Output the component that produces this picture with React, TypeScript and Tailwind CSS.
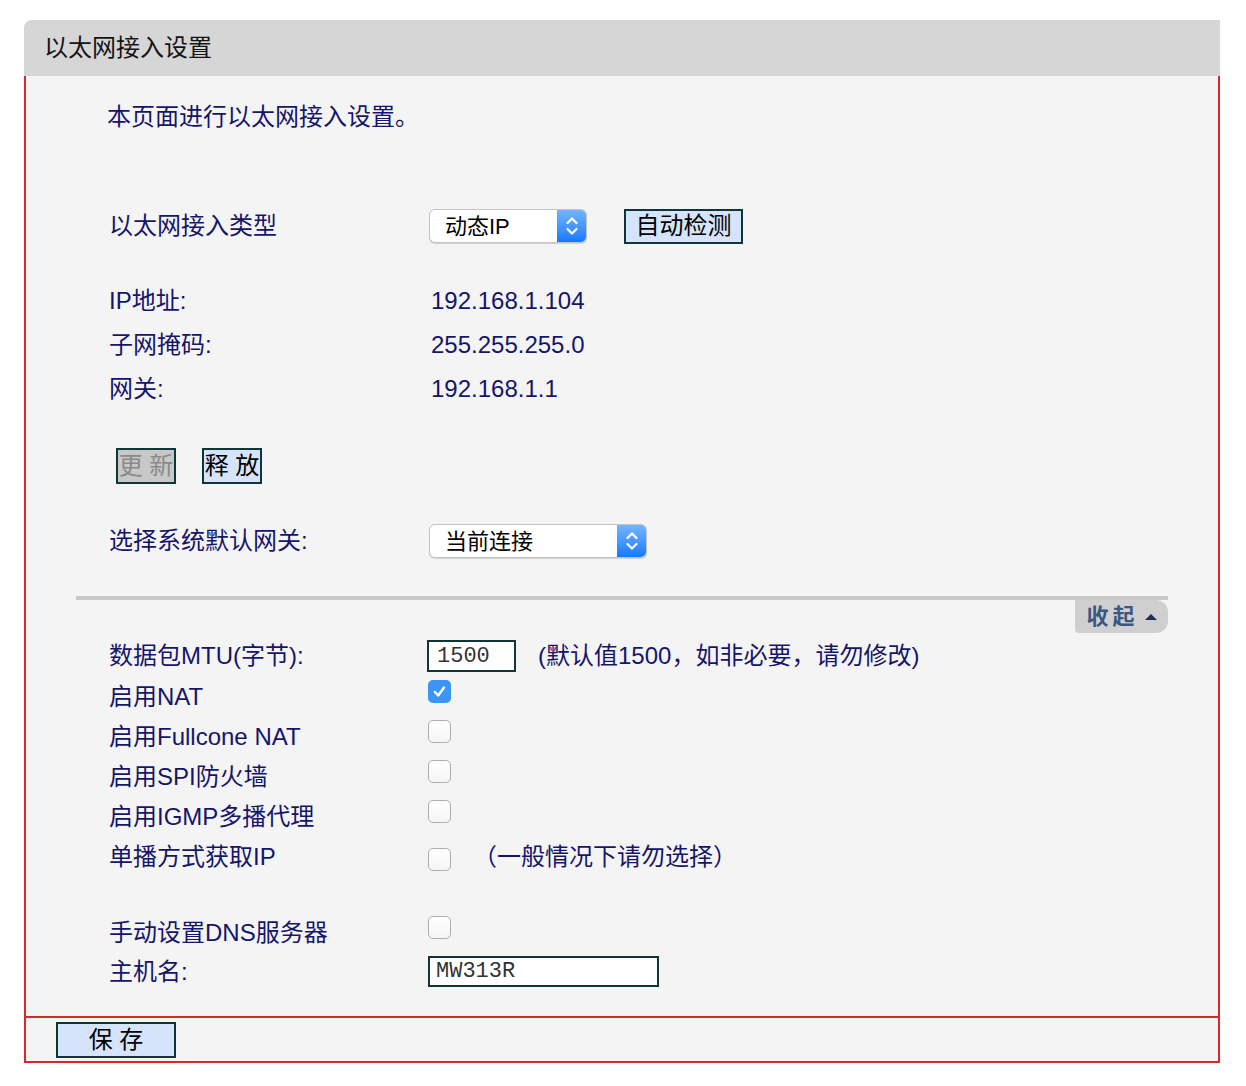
import React from "react";

const NAVY = "text-[#15156a]";

function Select({ label, width }: { label: string; width: string }) {
  return (
    <div className={`flex h-[34px] ${width} rounded-[6px] border border-[#c4c4c4] bg-white shadow-[0_1px_1px_rgba(0,0,0,0.15)] overflow-hidden`}>
      <div className="flex-1 flex items-center pl-[15px] text-[22px] text-black">{label}</div>
      <div className="w-[29px] flex items-center justify-center bg-gradient-to-b from-[#71b5ff] to-[#1678ff]">
        <svg width="14" height="22" viewBox="0 0 14 22" fill="none" stroke="white" strokeWidth="2.2" strokeLinecap="round" strokeLinejoin="round">
          <path d="M2.5 8 L7 3.5 L11.5 8" />
          <path d="M2.5 14 L7 18.5 L11.5 14" />
        </svg>
      </div>
    </div>
  );
}

function Checkbox({ checked = false, mt = "mt-[3px]" }: { checked?: boolean; mt?: string }) {
  if (checked) {
    return (
      <div className={`${mt} w-[23px] h-[23px] rounded-[5px] bg-[#3a95f5] flex items-center justify-center`}>
        <svg width="15" height="15" viewBox="0 0 15 15" fill="none" stroke="white" strokeWidth="2.4" strokeLinecap="round" strokeLinejoin="round">
          <path d="M3 8 L6.2 11.5 L12 3.5" />
        </svg>
      </div>
    );
  }
  return (
    <div className={`${mt} w-[23px] h-[23px] rounded-[5px] border border-[#adadad] bg-gradient-to-b from-white to-[#f5f5f5]`} />
  );
}

function CheckRow({ label, checked = false }: { label: string; checked?: boolean }) {
  return (
    <div className="flex h-[40px] items-start">
      <div className={`w-[319px] h-[40px] flex items-center ${NAVY}`}>{label}</div>
      <Checkbox checked={checked} />
    </div>
  );
}

export default function App() {
  return (
    <div
      className="min-h-[1086px] bg-white pt-[20px] pl-[24px]"
      style={{ fontFamily: '"Liberation Sans", "Noto Sans CJK SC", sans-serif' }}
    >
      <div className="w-[1196px]">
        {/* Header */}
        <div className="h-[56px] bg-[#d6d6d6] rounded-tl-[8px] flex items-center pl-[20px] text-[24px] text-[#141414]">
          以太网接入设置
        </div>

        {/* Body */}
        <div className="border-x-2 border-[#d52a2a] bg-[#f4f4f4] pt-[25px] pb-[26px] text-[24px]">
          <div className={`pl-[81px] h-[32px] flex items-center ${NAVY}`}>本页面进行以太网接入设置。</div>

          <div className="pl-[83px] mt-[75px]">
            <div className="flex h-[36px] items-center">
              <div className={`w-[320px] ${NAVY}`}>以太网接入类型</div>
              <Select label="动态IP" width="w-[158px]" />
              <button className="ml-[37px] h-[35px] w-[119px] border-2 border-[#0f3636] bg-[#d6e4fb] text-black text-[24px] leading-none flex items-center justify-center">
                自动检测
              </button>
            </div>

            <div className="mt-[35px]">
              {[
                ["IP地址:", "192.168.1.104"],
                ["子网掩码:", "255.255.255.0"],
                ["网关:", "192.168.1.1"],
              ].map(([k, v]) => (
                <div key={k} className={`flex h-[44px] items-center ${NAVY}`}>
                  <div className="w-[320px]">{k}</div>
                  <div className="pl-[2px]">{v}</div>
                </div>
              ))}
            </div>

            <div className="flex mt-[37px] ml-[7px] gap-[26px]">
              <div className="h-[36px] w-[60px] border-2 border-[#0f3636] bg-[#c8c8c8] text-[#8a8a8a] flex items-center justify-center leading-none">
                更 新
              </div>
              <div className="h-[36px] w-[60px] border-2 border-[#0f3636] bg-[#d6e4fb] text-black flex items-center justify-center leading-none">
                释 放
              </div>
            </div>

            <div className="flex h-[34px] items-center mt-[40px]">
              <div className={`w-[320px] ${NAVY}`}>选择系统默认网关:</div>
              <Select label="当前连接" width="w-[218px]" />
            </div>
          </div>

          {/* Divider with collapse tab */}
          <div className="mt-[38px] ml-[50px] w-[1092px]">
            <div className="h-[4px] bg-[#c8c8c8]" />
            <div className="flex justify-end">
              <div className="h-[33px] w-[93px] bg-[#cfcfcf] rounded-r-[12px] rounded-bl-[4px] flex items-center justify-center gap-[6px] text-[22px] font-bold text-[#3a5880]">
                <span className="tracking-[4px]">收起</span>
                <svg width="12" height="8" viewBox="0 0 12 8"><path d="M0 7 L6 1 L12 7 Z" fill="#1e2f55" /></svg>
              </div>
            </div>
          </div>

          <div className="pl-[83px] mt-[6px]">
            <div className="flex h-[34px] items-center">
              <div className={`w-[318px] ${NAVY}`}>数据包MTU(字节):</div>
              <div className="h-[32px] w-[89px] border-2 border-[#0f3636] bg-white flex items-center pl-[8px] text-[22px] text-[#333]" style={{ fontFamily: '"Liberation Mono", monospace' }}>
                1500
              </div>
              <div className={`ml-[22px] ${NAVY}`}>(默认值1500，如非必要，请勿修改)</div>
            </div>

            <div className="mt-[4px]">
              <CheckRow label="启用NAT" checked />
              <CheckRow label="启用Fullcone NAT" />
              <CheckRow label="启用SPI防火墙" />
              <CheckRow label="启用IGMP多播代理" />
              <div className="flex h-[40px] items-start">
                <div className={`w-[319px] h-[40px] flex items-center ${NAVY}`}>单播方式获取IP</div>
                <Checkbox mt="mt-[11px]" />
                <div className={`ml-[22px] h-[40px] flex items-center ${NAVY}`}>（一般情况下请勿选择）</div>
              </div>
            </div>

            <div className="mt-[36px]">
              <CheckRow label="手动设置DNS服务器" />
              <div className="flex h-[37px] items-center">
                <div className={`w-[319px] ${NAVY}`}>主机名:</div>
                <div className="h-[31px] w-[231px] border-2 border-[#0f3636] bg-white flex items-center pl-[6px] text-[22px] text-[#333]" style={{ fontFamily: '"Liberation Mono", monospace' }}>
                  MW313R
                </div>
              </div>
            </div>
          </div>
        </div>

        {/* Save row */}
        <div className="border-2 border-[#d52a2a] bg-[#f4f4f4] h-[47px] flex items-center pl-[30px]">
          <div className="h-[36px] w-[120px] border-2 border-[#0f3636] bg-[#d6e4fb] text-[24px] text-black flex items-center justify-center leading-none">
            保 存
          </div>
        </div>
      </div>
    </div>
  );
}
